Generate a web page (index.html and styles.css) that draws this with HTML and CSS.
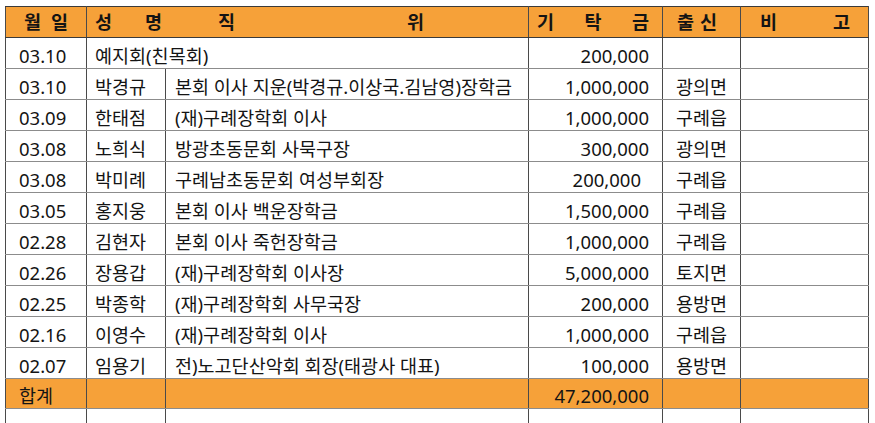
FILE: index.html
```html
<!DOCTYPE html>
<html lang="ko">
<head>
<meta charset="utf-8">
<title>기탁금 명단</title>
<link rel="stylesheet" href="styles.css">
</head>
<body>
<table class="ledger">
  <colgroup>
    <col class="w-date"><col class="w-name"><col class="w-pos"><col class="w-amt"><col class="w-org"><col class="w-note">
  </colgroup>
  <thead>
    <tr class="row-head">
      <th><div class="pair"><span>월</span><span>일</span></div></th>
      <th colspan="2"><div class="title"><span>성</span><span class="t-myeong">명</span><span class="t-jik">직</span><span class="t-wi">위</span></div></th>
      <th><div class="spread amt-head"><span>기</span><span>탁</span><span>금</span></div></th>
      <th><div class="pair org-head"><span>출</span><span>신</span></div></th>
      <th><div class="spread note-head"><span>비</span><span>고</span></div></th>
    </tr>
  </thead>
  <tbody>
    <tr><td class="date">03.10</td><td class="name" colspan="2">예지회(친목회)</td><td class="amt">200,000</td><td class="org"></td><td></td></tr>
    <tr><td class="date">03.10</td><td class="name">박경규</td><td class="pos">본회 이사 지운(박경규.이상국.김남영)장학금</td><td class="amt">1,000,000</td><td class="org">광의면</td><td></td></tr>
    <tr><td class="date">03.09</td><td class="name">한태점</td><td class="pos">(재)구례장학회 이사</td><td class="amt">1,000,000</td><td class="org">구례읍</td><td></td></tr>
    <tr><td class="date">03.08</td><td class="name">노희식</td><td class="pos">방광초동문회 사묵구장</td><td class="amt">300,000</td><td class="org">광의면</td><td></td></tr>
    <tr><td class="date">03.08</td><td class="name">박미례</td><td class="pos">구례남초동문회 여성부회장</td><td class="amt amt-off">200,000</td><td class="org">구례읍</td><td></td></tr>
    <tr><td class="date">03.05</td><td class="name">홍지웅</td><td class="pos">본회 이사 백운장학금</td><td class="amt">1,500,000</td><td class="org">구례읍</td><td></td></tr>
    <tr><td class="date">02.28</td><td class="name">김현자</td><td class="pos">본회 이사 죽헌장학금</td><td class="amt">1,000,000</td><td class="org">구례읍</td><td></td></tr>
    <tr><td class="date">02.26</td><td class="name">장용갑</td><td class="pos">(재)구례장학회 이사장</td><td class="amt">5,000,000</td><td class="org">토지면</td><td></td></tr>
    <tr><td class="date">02.25</td><td class="name">박종학</td><td class="pos">(재)구례장학회 사무국장</td><td class="amt">200,000</td><td class="org">용방면</td><td></td></tr>
    <tr><td class="date">02.16</td><td class="name">이영수</td><td class="pos">(재)구례장학회 이사</td><td class="amt">1,000,000</td><td class="org">구례읍</td><td></td></tr>
    <tr><td class="date">02.07</td><td class="name">임용기</td><td class="pos">전)노고단산악회 회장(태광사 대표)</td><td class="amt">100,000</td><td class="org">용방면</td><td></td></tr>
    <tr class="row-total"><td class="date">합계</td><td></td><td></td><td class="amt">47,200,000</td><td></td><td></td></tr>
    <tr class="row-blank"><td></td><td></td><td></td><td></td><td></td><td></td></tr>
  </tbody>
</table>
</body>
</html>
```

FILE: styles.css
```css
html, body {
  margin: 0;
  padding: 0;
  background: #ffffff;
}

body {
  font-family: "Noto Sans", "Noto Sans CJK KR", sans-serif;
  font-size: 18.5px;
  color: #141414;
  overflow: hidden;
}

.ledger {
  border-collapse: collapse;
  table-layout: fixed;
  width: 863px;
  margin: 6px 0 0 5px;
}

.w-date { width: 81px; }
.w-name { width: 79px; }
.w-pos  { width: 363px; }
.w-amt  { width: 134px; }
.w-org  { width: 78px; }
.w-note { width: 128px; }

.ledger th,
.ledger td {
  border-left: 1.5px solid #4a4a4a;
  border-right: 1.5px solid #4a4a4a;
  border-top: 1px solid #8c8c8c;
  border-bottom: 1px solid #8c8c8c;
  padding: 0;
  line-height: 22px;
  white-space: nowrap;
  overflow: hidden;
  vertical-align: middle;
}

.ledger .row-head {
  height: 31px;
  background: #f6a139;
}

.ledger .row-head th {
  border-top: 1.5px solid #3a3a3a;
  border-bottom: 1.5px solid #3a3a3a;
  font-weight: 700;
  text-align: left;
}

.pair {
  display: flex;
  justify-content: center;
  gap: 10px;
}

.pair.org-head {
  justify-content: flex-start;
  gap: 6px;
  padding-left: 14px;
}

.title {
  display: flex;
  padding-left: 8px;
}

.t-myeong { margin-left: 33px; }
.t-jik    { margin-left: 56px; }
.t-wi     { margin-left: 172px; }

.spread {
  display: flex;
  justify-content: space-between;
}

.amt-head  { padding: 0 13px 0 8px; }
.note-head { padding: 0 18px 0 19px; }

.ledger tbody tr {
  height: 31px;
}

.ledger tbody td {
  padding-top: 5px;
}

.ledger .date { padding-left: 13px; }
.ledger .name { padding-left: 8px; }
.ledger .pos  { padding-left: 9px; }
.ledger .org  { padding-left: 13px; }

.ledger .amt {
  text-align: right;
  padding-right: 13px;
}

.ledger .amt-off { padding-right: 21px; }

.ledger .row-total {
  height: 30px;
  background: #f6a139;
}

.ledger .row-blank {
  height: 22px;
}
```
